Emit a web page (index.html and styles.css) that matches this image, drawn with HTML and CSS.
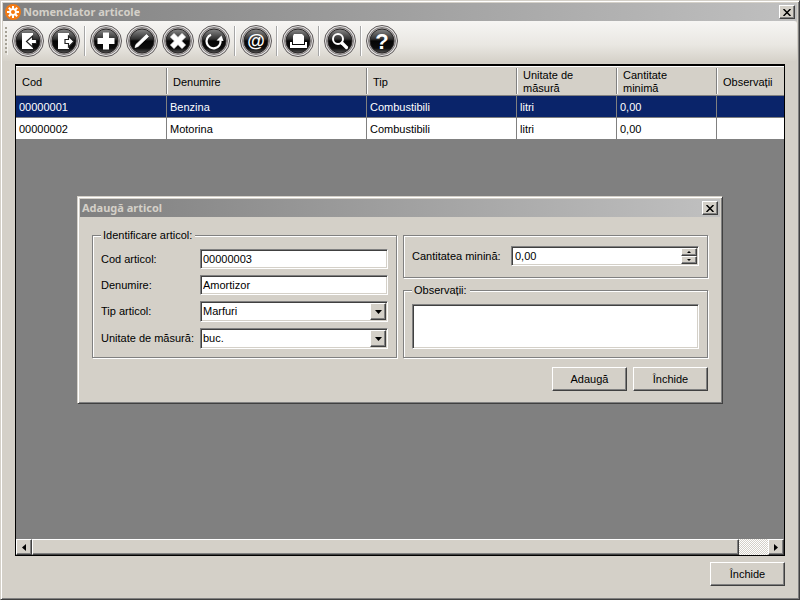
FILE: index.html
```html
<!DOCTYPE html>
<html lang="ro">
<head>
  <meta charset="UTF-8" />
  <meta name="viewport" content="width=device-width, initial-scale=1.0" />
  <title>Nomenclator articole</title>
  <link rel="stylesheet" href="styles.css">
</head>
<body>
<!-- shared round button face -->
<svg class="defs" width="0" height="0" aria-hidden="true">
  <defs>
    <linearGradient id="gloss" x1="0" y1="0" x2="0" y2="1">
      <stop offset="0" stop-color="#8a8a8a" />
      <stop offset="0.42" stop-color="#303030" />
      <stop offset="0.5" stop-color="#050505" />
      <stop offset="0.8" stop-color="#0c0c0c" />
      <stop offset="1" stop-color="#555" />
    </linearGradient>
    <symbol id="disc" viewBox="0 0 32 32">
      <circle cx="16" cy="16" r="15.5" fill="#e4e2e2" stroke="#5c5858" />
      <circle cx="16" cy="16" r="13.5" fill="#b5b2b2" stroke="#827e7e" />
      <circle cx="16" cy="16" r="12" fill="url(#gloss)" stroke="#2b2828" />
    </symbol>
  </defs>
</svg>

<div class="window main-window">
  <div class="caption">
    <svg class="app-icon" viewBox="0 0 16 16">
      <circle cx="8" cy="8" r="8" fill="#f47a12" />
      <g stroke="#fff" stroke-width="2">
        <path d="M8 2v12M2 8h12M3.8 3.8l8.4 8.4M12.2 3.8l-8.4 8.4" />
      </g>
      <circle cx="8" cy="8" r="3.8" fill="#fff" />
      <circle cx="8" cy="8" r="2" fill="#f47a12" />
    </svg>
    <span class="caption-text">Nomenclator articole</span>
    <button class="close" aria-label="Închide fereastra">
      <svg viewBox="0 0 8 7"><path d="M0.500 0l7 7M7.500 0l-7 7" stroke="#000" stroke-width="1.500" /></svg>
    </button>
  </div>

  <div class="toolbar">
    <span class="grip"></span>
    <button class="tool" aria-label="Import">
      <svg viewBox="0 0 32 32"><use href="#disc" />
        <path d="M10 8h11v5l-7 3.500 7 3.500v4H10z" fill="#fff" />
        <path d="M14.500 16.500l6-5.500v3.500H24.500v4h-4V22z" fill="#fff" stroke="#222" stroke-width="1.200" />
      </svg>
    </button>
    <button class="tool" aria-label="Export">
      <svg viewBox="0 0 32 32"><use href="#disc" />
        <path d="M10 8h11v16H10z" fill="#fff" />
        <path d="M26 16.500L20.500 11v3.500H17v4h3.500V22z" fill="#fff" stroke="#222" stroke-width="1.200" />
      </svg>
    </button>
    <span class="separator"></span>
    <button class="tool" aria-label="Adaugă">
      <svg viewBox="0 0 32 32"><use href="#disc" />
        <path d="M13 7.500h6V13h5.500v6H19v5.500h-6V19H7.500v-6H13z" fill="#fff" />
      </svg>
    </button>
    <button class="tool" aria-label="Modifică">
      <svg viewBox="0 0 32 32"><use href="#disc" />
        <path d="M20.500 9.500l2 2L12 21.500 9 22.500l1-3z" fill="#fff" stroke="#fff" stroke-width="0.800" />
      </svg>
    </button>
    <button class="tool" aria-label="Șterge">
      <svg viewBox="0 0 32 32"><use href="#disc" />
        <path d="M12 8.500l4 4 4-4 3.500 3.500-4 4 4 4-3.500 3.500-4-4-4 4L8.500 20l4-4-4-4z" fill="#fff" stroke="#fff" stroke-width="0.800" />
      </svg>
    </button>
    <button class="tool" aria-label="Reîncarcă">
      <svg viewBox="0 0 32 32"><use href="#disc" />
        <path d="M13 9.800a7 7 0 1 0 9.500 5.500" fill="none" stroke="#fff" stroke-width="2.200" />
        <path d="M18.500 15.500l5-5 2 5.500z" fill="#fff" />
      </svg>
    </button>
    <span class="separator"></span>
    <button class="tool" aria-label="E-mail">
      <svg viewBox="0 0 32 32"><use href="#disc" />
        <text class="glyph-at" x="16" y="22" text-anchor="middle">@</text>
      </svg>
    </button>
    <span class="separator"></span>
    <button class="tool" aria-label="Tipărește">
      <svg viewBox="0 0 32 32"><use href="#disc" />
        <path d="M12 9h8l2 2v8H11v-8z" fill="#fff" />
        <path d="M8 17h2v3h13v-3h2v6H8z" fill="#fff" />
      </svg>
    </button>
    <span class="separator"></span>
    <button class="tool" aria-label="Caută">
      <svg viewBox="0 0 32 32"><use href="#disc" />
        <circle cx="14" cy="14" r="5" fill="none" stroke="#fff" stroke-width="2" />
        <path d="M18 18l4.500 4.500" stroke="#fff" stroke-width="3.200" stroke-linecap="round" />
      </svg>
    </button>
    <span class="separator"></span>
    <button class="tool" aria-label="Ajutor">
      <svg viewBox="0 0 32 32"><use href="#disc" />
        <text class="glyph-help" x="16" y="24" text-anchor="middle">?</text>
      </svg>
    </button>
  </div>

  <div class="grid-view">
    <table class="articles">
      <colgroup>
        <col class="col-code"><col class="col-name"><col class="col-type">
        <col class="col-small"><col class="col-small"><col>
      </colgroup>
      <thead>
        <tr>
          <th>Cod</th>
          <th>Denumire</th>
          <th>Tip</th>
          <th>Unitate de<br>măsură</th>
          <th>Cantitate<br>minimă</th>
          <th>Observații</th>
        </tr>
      </thead>
      <tbody>
        <tr class="selected">
          <td>00000001</td><td>Benzina</td><td>Combustibili</td><td>litri</td><td>0,00</td><td></td>
        </tr>
        <tr>
          <td>00000002</td><td>Motorina</td><td>Combustibili</td><td>litri</td><td>0,00</td><td></td>
        </tr>
      </tbody>
    </table>
    <div class="scrollbar">
      <button class="scroll-btn" aria-label="Stânga"><svg viewBox="0 0 4 7"><path d="M4 0v7L0 3.500z" /></svg></button>
      <div class="track"><div class="thumb"></div></div>
      <button class="scroll-btn" aria-label="Dreapta"><svg viewBox="0 0 4 7"><path d="M0 0v7l4-3.500z" /></svg></button>
    </div>
  </div>

  <div class="footer">
    <button class="btn">Închide</button>
  </div>

  <div class="window dialog" role="dialog" aria-labelledby="dialog-title">
    <div class="caption">
      <span class="caption-text" id="dialog-title">Adaugă articol</span>
      <button class="close" aria-label="Închide dialogul">
        <svg viewBox="0 0 8 7"><path d="M0.500 0l7 7M7.500 0l-7 7" stroke="#000" stroke-width="1.500" /></svg>
      </button>
    </div>
    <form class="dialog-body">
      <div class="columns">
        <fieldset class="group">
          <legend>Identificare articol:</legend>
          <div class="fields">
            <div class="field">
              <label for="cod">Cod articol:</label>
              <input class="box" id="cod" type="text" value="00000003">
            </div>
            <div class="field">
              <label for="denumire">Denumire:</label>
              <input class="box" id="denumire" type="text" value="Amortizor">
            </div>
            <div class="field">
              <label for="tip">Tip articol:</label>
              <div class="combo">
                <select class="box" id="tip"><option>Marfuri</option><option>Combustibili</option></select>
                <span class="combo-arrow"><svg viewBox="0 0 7 4"><path d="M0 0h7L3.500 4z" /></svg></span>
              </div>
            </div>
            <div class="field">
              <label for="um">Unitate de măsură:</label>
              <div class="combo">
                <select class="box" id="um"><option>buc.</option><option>litri</option></select>
                <span class="combo-arrow"><svg viewBox="0 0 7 4"><path d="M0 0h7L3.500 4z" /></svg></span>
              </div>
            </div>
          </div>
        </fieldset>
        <div class="side">
          <div class="group quantity">
            <div class="field">
              <label for="cantitate">Cantitatea minină:</label>
              <div class="box spinner">
                <input id="cantitate" type="text" value="0,00">
                <div class="spin-buttons">
                  <button type="button" aria-label="Mai mult"><svg viewBox="0 0 4 2"><path d="M0 2h4L2 0z" /></svg></button>
                  <button type="button" aria-label="Mai puțin"><svg viewBox="0 0 4 2"><path d="M0 0h4L2 2z" /></svg></button>
                </div>
              </div>
            </div>
          </div>
          <fieldset class="group notes">
            <legend>Observații:</legend>
            <textarea class="box" aria-label="Observații"></textarea>
          </fieldset>
        </div>
      </div>
      <div class="actions">
        <button class="btn" type="button">Adaugă</button>
        <button class="btn" type="button">Închide</button>
      </div>
    </form>
  </div>
</div>
</body>
</html>
```

FILE: styles.css
```css
* {
  box-sizing: border-box;
}
body {
  margin: 0;
  background: #d4d0c8;
}
body, button, input, select, textarea {
  font-family: "Liberation Sans", Arial, sans-serif;
  font-size: 11px;
  line-height: 13px;
  color: #000;
}
button, input, select, textarea {
  margin: 0;
  padding: 0;
  border: none;
  border-radius: 0;
  outline: none;
}
svg {
  display: block;
}
.defs {
  position: absolute;
}

/* windows */
.window {
  display: flex;
  flex-direction: column;
  padding: 2px;
  background: #d4d0c8;
  border: 1px solid;
  border-color: #d4d0c8 #404040 #404040 #d4d0c8;
  box-shadow: inset 1px 1px 0 #fff, inset -1px -1px 0 #808080;
}
.main-window {
  position: relative;
  min-height: 100vh;
}
.caption {
  display: flex;
  align-items: center;
  height: 18px;
  padding: 0 2px;
  background: linear-gradient(90deg, #808080, #c0c0c0);
}
.app-icon {
  width: 16px;
  height: 16px;
  margin-right: 2px;
}
.caption-text {
  flex: 1;
  padding-bottom: 2px;
  font-family: "Noto Sans", Tahoma, sans-serif;
  font-weight: 700;
  color: #d4d0c8;
}
.close, .btn, .scroll-btn, .thumb, .combo-arrow, .spin-buttons button {
  display: flex;
  align-items: center;
  justify-content: center;
  background: #d4d0c8;
  border: 1px solid;
  border-color: #fff #404040 #404040 #fff;
  box-shadow: inset -1px -1px 0 #808080;
}
.close {
  width: 16px;
  height: 14px;
}
.close svg {
  width: 8px;
  height: 7px;
}
.btn {
  width: 75px;
  height: 24px;
}

/* toolbar */
.toolbar {
  display: flex;
  align-items: center;
  gap: 4px;
  height: 40px;
  padding: 0 2px;
  background: linear-gradient(#f6f5f3, #e9e7e2 60%, #d6d2ca);
  border-radius: 0 3px 3px 0;
}
.grip {
  width: 3px;
  height: 28px;
  background: repeating-linear-gradient(#a5a196 0 2px, transparent 2px 4px);
  border-right: 1px solid #f4f2ee;
}
.tool {
  width: 32px;
  height: 32px;
  background: none;
}
.tool svg {
  width: 32px;
  height: 32px;
}
.separator {
  width: 2px;
  height: 30px;
  background: #a6a6a6;
  border-right: 1px solid #fff;
}
.glyph-at {
  font: 700 18px "Liberation Sans", Arial, sans-serif;
  fill: #fff;
}
.glyph-help {
  font: 700 22px "Liberation Sans", Arial, sans-serif;
  fill: #fff;
}

/* articles table */
.grid-view {
  flex: 1;
  display: flex;
  flex-direction: column;
  justify-content: space-between;
  margin: 3px 12px 0;
  background: #808080;
  border: 1px solid #000;
  border-top-width: 2px;
}
.articles {
  width: 100%;
  table-layout: fixed;
  border-collapse: separate;
  border-spacing: 0;
  background: #fff;
}
.col-code { width: 151px; }
.col-name { width: 200px; }
.col-type { width: 150px; }
.col-small { width: 100px; }
.articles th {
  position: relative;
  height: 30px;
  padding: 2px 5px 0 6px;
  font-weight: 400;
  text-align: left;
  background: #d4d0c8;
  border-top: 1px solid #fff;
  border-bottom: 1px solid #808080;
}
.articles th:not(:last-child)::after {
  content: "";
  position: absolute;
  top: 1px;
  right: -1px;
  bottom: 1px;
  width: 2px;
  background: linear-gradient(90deg, #808080 50%, #fff 50%);
  z-index: 1;
}
.articles td {
  height: 22px;
  padding: 2px 3px 0;
  border-right: 1px solid #808080;
  border-bottom: 1px solid #808080;
}
.articles td:last-child {
  border-right: none;
}
.selected td {
  color: #fff;
  background: #0a246a;
}
.scrollbar {
  display: flex;
  height: 16px;
  background: repeating-conic-gradient(#fff 0 25%, #d4d0c8 0 50%) 0 0 / 2px 2px;
}
.scroll-btn {
  width: 16px;
}
.scroll-btn svg {
  width: 4px;
  height: 7px;
}
.track {
  flex: 1;
  display: flex;
}
.thumb {
  width: 96%;
}
.footer {
  display: flex;
  justify-content: flex-end;
  padding: 6px 12px 11px;
}

/* add article dialog */
.dialog {
  position: absolute;
  top: 195px;
  left: 76px;
  width: 646px;
}
.dialog-body {
  padding: 12px 12px 10px;
}
.columns {
  display: grid;
  grid-template-columns: 1fr 1fr;
  gap: 6px;
}
.side {
  display: flex;
  flex-direction: column;
  gap: 6px;
  padding-top: 6px;
}
.group {
  min-width: 0;
  margin: 0;
  padding: 7px 8px 8px;
  border: 1px solid #808080;
  box-shadow: inset 1px 1px 0 #fff, 1px 1px 0 #fff;
}
.group legend {
  position: relative;
  padding: 0 3px 0 2px;
  background: #d4d0c8;
}
.quantity {
  padding: 10px 8px 11px;
}
.fields {
  display: flex;
  flex-direction: column;
  gap: 6px;
}
.field {
  display: grid;
  grid-template-columns: 99px 1fr;
  align-items: center;
}
.box {
  width: 100%;
  height: 20px;
  padding: 0 1px;
  background: #fff;
  border: 1px solid;
  border-color: #808080 #fff #fff #808080;
  box-shadow: inset 1px 1px 0 #404040, inset -1px -1px 0 #d4d0c8;
}
input.box {
  padding-left: 2px;
}
.combo {
  position: relative;
}
.combo .box {
  display: block;
  height: 21px;
  padding-left: 2px;
  appearance: none;
}
.combo-arrow {
  position: absolute;
  top: 2px;
  right: 2px;
  bottom: 2px;
  width: 16px;
  pointer-events: none;
}
.combo-arrow svg {
  width: 7px;
  height: 4px;
}
.spinner {
  display: flex;
  padding: 1px;
}
.spinner input {
  flex: 1;
  min-width: 0;
  padding-left: 2px;
  background: none;
}
.spin-buttons {
  display: flex;
  flex-direction: column;
  width: 16px;
}
.spin-buttons button {
  flex: 1;
}
.spin-buttons svg {
  width: 4px;
  height: 2px;
}
.notes .box {
  display: block;
  height: 45px;
  resize: none;
}
.actions {
  display: flex;
  justify-content: flex-end;
  gap: 6px;
  margin-top: 9px;
}
```
